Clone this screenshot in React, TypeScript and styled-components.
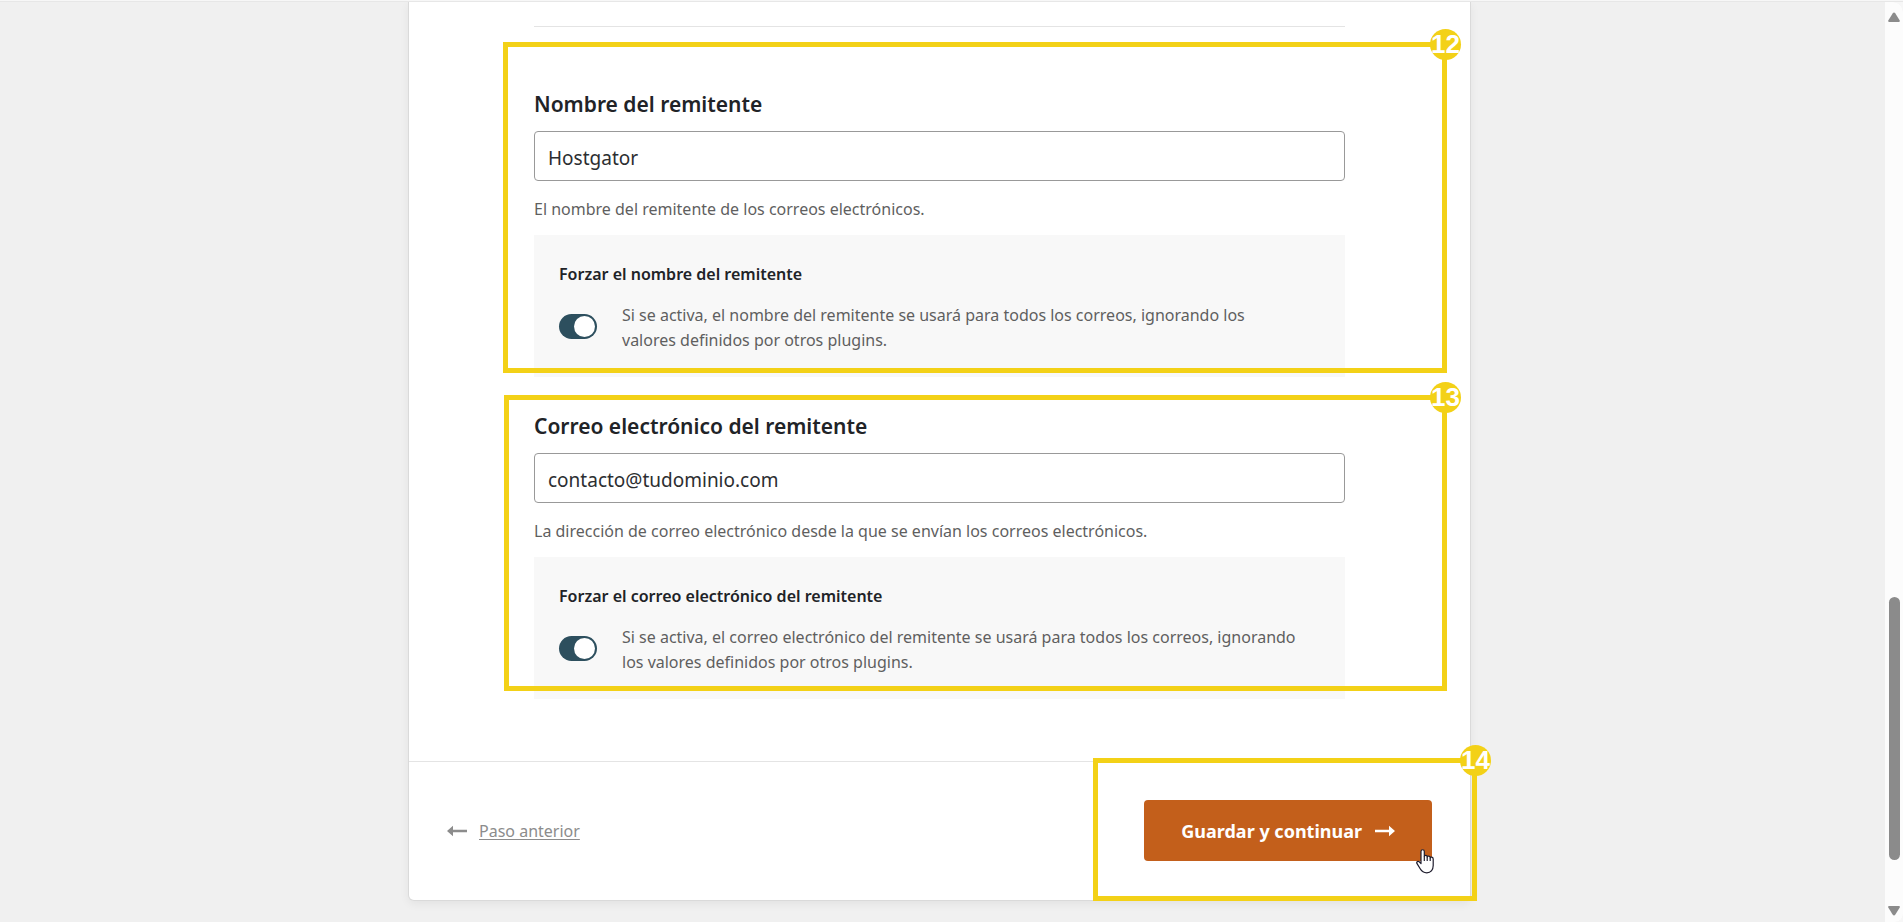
import React, { useId, useState } from 'react';
import styled, { createGlobalStyle } from 'styled-components';

const GlobalStyle = createGlobalStyle`
  *, *::before, *::after { box-sizing: border-box; }
  body {
    margin: 0;
    background: #f0f0f0;
    color: #212327;
    font-family: "Segoe UI", "Noto Sans", "Open Sans", sans-serif;
    font-size: 16px;
    line-height: 25px;
  }
`;

const Window = styled.div`
  display: flex;
  flex-direction: column;
  min-height: 100vh;
  background: #f7f7f7;
`;

const TopEdge = styled.div`
  flex: none;
  height: 2px;
  border-bottom: 1px solid #e7e7e7;
`;

const Viewport = styled.div`
  flex: 1;
  display: flex;
  overflow: hidden;
  border-radius: 0 10px 8px 0;
  background: #f0f0f0;
`;

const Main = styled.main`
  flex: 1;
  min-width: 0;
  padding: 0 6px 20px 0;
`;

const Card = styled.form`
  max-width: 1063px;
  margin: 0 auto;
  background: #fff;
  border: 1px solid #dadada;
  border-top: 0;
  border-radius: 0 0 6px 6px;
  box-shadow: 0 3px 10px rgba(0, 0, 0, 0.06);
`;

const CardBody = styled.div`
  padding: 24px 125px 62px;
`;

const Divider = styled.hr`
  margin: 0 0 63px;
  border: 0;
  border-top: 1px solid #e4e4e4;
`;

const FieldList = styled.div`
  display: grid;
  gap: 35px;
`;

const Field = styled.section`
  position: relative;
`;

const FieldLabel = styled.label`
  display: block;
  margin-bottom: 13px;
  font-size: 21px;
  font-weight: 600;
  line-height: 28px;
`;

const TextInput = styled.input`
  display: block;
  width: 100%;
  height: 50px;
  padding: 4px 13px 0;
  border: 1px solid #999;
  border-radius: 4px;
  background: #fff;
  color: #2c2e31;
  font: inherit;
  font-size: 19px;
`;

const Hint = styled.p`
  margin: 0;
  color: #5f5f5f;
`;

const FieldHint = styled(Hint)`
  margin: 16px 0 13px;
`;

const Panel = styled.div`
  padding: 27px 47px 24px 25px;
  background: #f8f8f8;
`;

const PanelLabel = styled.label`
  display: block;
  margin-bottom: 16px;
  font-weight: 600;
`;

const PanelRow = styled.div`
  display: flex;
  align-items: flex-start;
  gap: 25px;
`;

const Toggle = styled.input`
  appearance: none;
  flex: none;
  display: flex;
  width: 38px;
  height: 25px;
  margin: 11px 0 0;
  padding: 2px;
  border-radius: 13px;
  background: #999;
  cursor: pointer;

  &::before {
    content: '';
    width: 21px;
    height: 21px;
    border-radius: 50%;
    background: #fff;
  }

  &:checked {
    justify-content: flex-end;
    background: #2d4f5e;
  }
`;

const CardFooter = styled.footer`
  display: flex;
  align-items: center;
  justify-content: space-between;
  padding: 38px 38px 39px;
  border-top: 1px solid #e4e4e4;
`;

const ActionText = styled.span`
  padding-top: 2px;
`;

const BackLink = styled.a`
  display: flex;
  align-items: center;
  gap: 12px;
  color: #8c8c8c;
  text-decoration: none;

  ${ActionText} {
    text-decoration: underline;
    text-underline-offset: 2px;
  }
`;

const SaveArea = styled.div`
  position: relative;
`;

const SaveButton = styled.button`
  display: flex;
  align-items: center;
  gap: 13px;
  height: 61px;
  padding: 0 37px;
  border: 0;
  border-radius: 4px;
  background: #c35f1b;
  color: #fff;
  font: inherit;
  font-size: 18px;
  font-weight: 700;
  cursor: pointer;
`;

const Outline = styled.div<{ $inset: string }>`
  position: absolute;
  inset: ${(p) => p.$inset};
  border: 5px solid #f3d117;
  pointer-events: none;
`;

const Badge = styled.span`
  position: absolute;
  top: -18px;
  right: -19px;
  display: flex;
  align-items: center;
  justify-content: center;
  width: 31px;
  height: 31px;
  border-radius: 50%;
  background: #f3d117;
  color: #fff;
  font: 700 26px/31px "Liberation Sans", Arial, sans-serif;
`;

const Pointer = styled.svg`
  position: absolute;
  right: -2px;
  bottom: -13px;
  pointer-events: none;
`;

const Scrollbar = styled.div`
  flex: none;
  display: flex;
  flex-direction: column;
  align-items: center;
  width: 18px;
  padding: 10px 0 6px;
  background: #fcfcfc;
`;

const Track = styled.div`
  flex: 1;
  display: flex;
  flex-direction: column;
  width: 11px;
`;

const TrackPart = styled.div<{ $share: number; $thumb?: boolean }>`
  flex: ${(p) => p.$share} 1 0;
  border-radius: 6px;
  background: ${(p) => (p.$thumb ? '#8b8b8b' : 'transparent')};
`;

const Arrow = ({ left }: { left?: boolean }) => (
  <svg width="20" height="12" viewBox="0 0 20 12" fill="currentColor" aria-hidden="true">
    {left ? (
      <path d="M0 6 6 .7V4.8H20V7.2H6V11.3Z" />
    ) : (
      <path d="M20 6 14 .7V4.8H0V7.2H14V11.3Z" />
    )}
  </svg>
);

const ScrollArrow = ({ down }: { down?: boolean }) => (
  <svg width="12" height="10" viewBox="0 0 12 10" fill="#8b8b8b" aria-hidden="true">
    {down ? (
      <path d="M1 0H11Q12.4.4 11.6 1.8L7.4 8.6Q6 10.6 4.6 8.6L.4 1.8Q-.4.4 1 0Z" />
    ) : (
      <path d="M1 10H11Q12.4 9.6 11.6 8.2L7.4 1.4Q6-.6 4.6 1.4L.4 8.2Q-.4 9.6 1 10Z" />
    )}
  </svg>
);

const Callout = ({ number, inset }: { number: number; inset: string }) => (
  <Outline $inset={inset}>
    <Badge>{number}</Badge>
  </Outline>
);

interface SenderFieldProps {
  label: string;
  type: string;
  initial: string;
  hint: string;
  forceLabel: string;
  forceHint: string;
  children: React.ReactNode;
}

function SenderField({ label, type, initial, hint, forceLabel, forceHint, children }: SenderFieldProps) {
  const id = useId();
  const [value, setValue] = useState(initial);
  const [forced, setForced] = useState(true);
  return (
    <Field>
      <FieldLabel htmlFor={`${id}-value`}>{label}</FieldLabel>
      <TextInput
        id={`${id}-value`}
        type={type}
        value={value}
        onChange={(e) => setValue(e.target.value)}
      />
      <FieldHint>{hint}</FieldHint>
      <Panel>
        <PanelLabel htmlFor={`${id}-force`}>{forceLabel}</PanelLabel>
        <PanelRow>
          <Toggle
            id={`${id}-force`}
            type="checkbox"
            checked={forced}
            onChange={(e) => setForced(e.target.checked)}
          />
          <Hint>{forceHint}</Hint>
        </PanelRow>
      </Panel>
      {children}
    </Field>
  );
}

export default function App() {
  return (
    <Window>
      <GlobalStyle />
      <TopEdge />
      <Viewport>
        <Main>
          <Card onSubmit={(e) => e.preventDefault()}>
            <CardBody>
              <Divider />
              <FieldList>
                <SenderField
                  label="Nombre del remitente"
                  type="text"
                  initial="Hostgator"
                  hint="El nombre del remitente de los correos electrónicos."
                  forceLabel="Forzar el nombre del remitente"
                  forceHint="Si se activa, el nombre del remitente se usará para todos los correos, ignorando los valores definidos por otros plugins."
                >
                  <Callout number={12} inset="-48px -102px 4px -31px" />
                </SenderField>
                <SenderField
                  label="Correo electrónico del remitente"
                  type="email"
                  initial="contacto@tudominio.com"
                  hint="La dirección de correo electrónico desde la que se envían los correos electrónicos."
                  forceLabel="Forzar el correo electrónico del remitente"
                  forceHint="Si se activa, el correo electrónico del remitente se usará para todos los correos, ignorando los valores definidos por otros plugins."
                >
                  <Callout number={13} inset="-17px -102px 8px -30px" />
                </SenderField>
              </FieldList>
            </CardBody>
            <CardFooter>
              <BackLink href="#anterior">
                <Arrow left />
                <ActionText>Paso anterior</ActionText>
              </BackLink>
              <SaveArea>
                <SaveButton type="submit">
                  <ActionText>Guardar y continuar</ActionText>
                  <Arrow />
                </SaveButton>
                <Callout number={14} inset="-42px -45px -40px -51px" />
                <Pointer width="18" height="25" viewBox="0 0 18 25" aria-hidden="true">
                  <path
                    d="M5 14.5V2.4C5 .2 8.3.2 8.3 2.4V7.6C8.3 6 11.2 6 11.2 8C11.2 6.6 14.2 6.8 14.2 8.8C14.4 7.6 17.2 7.8 17.2 10V16.6C17.2 21 14.6 23.8 10.8 23.8C7.4 23.8 5.6 22.2 4.2 19.8L.9 14.4C.2 12.8 2 11.8 3.2 12.8Z"
                    fill="#fff"
                    stroke="#1d1b2c"
                    strokeWidth="1.2"
                    strokeLinejoin="round"
                  />
                  <path d="M8.3 7.4V12M11.2 8V12M14.2 8.8V12" stroke="#1d1b2c" strokeWidth="1.2" />
                </Pointer>
              </SaveArea>
            </CardFooter>
          </Card>
        </Main>
        <Scrollbar aria-hidden="true">
          <ScrollArrow />
          <Track>
            <TrackPart $share={575} />
            <TrackPart $share={263} $thumb />
            <TrackPart $share={46} />
          </Track>
          <ScrollArrow down />
        </Scrollbar>
      </Viewport>
    </Window>
  );
}
